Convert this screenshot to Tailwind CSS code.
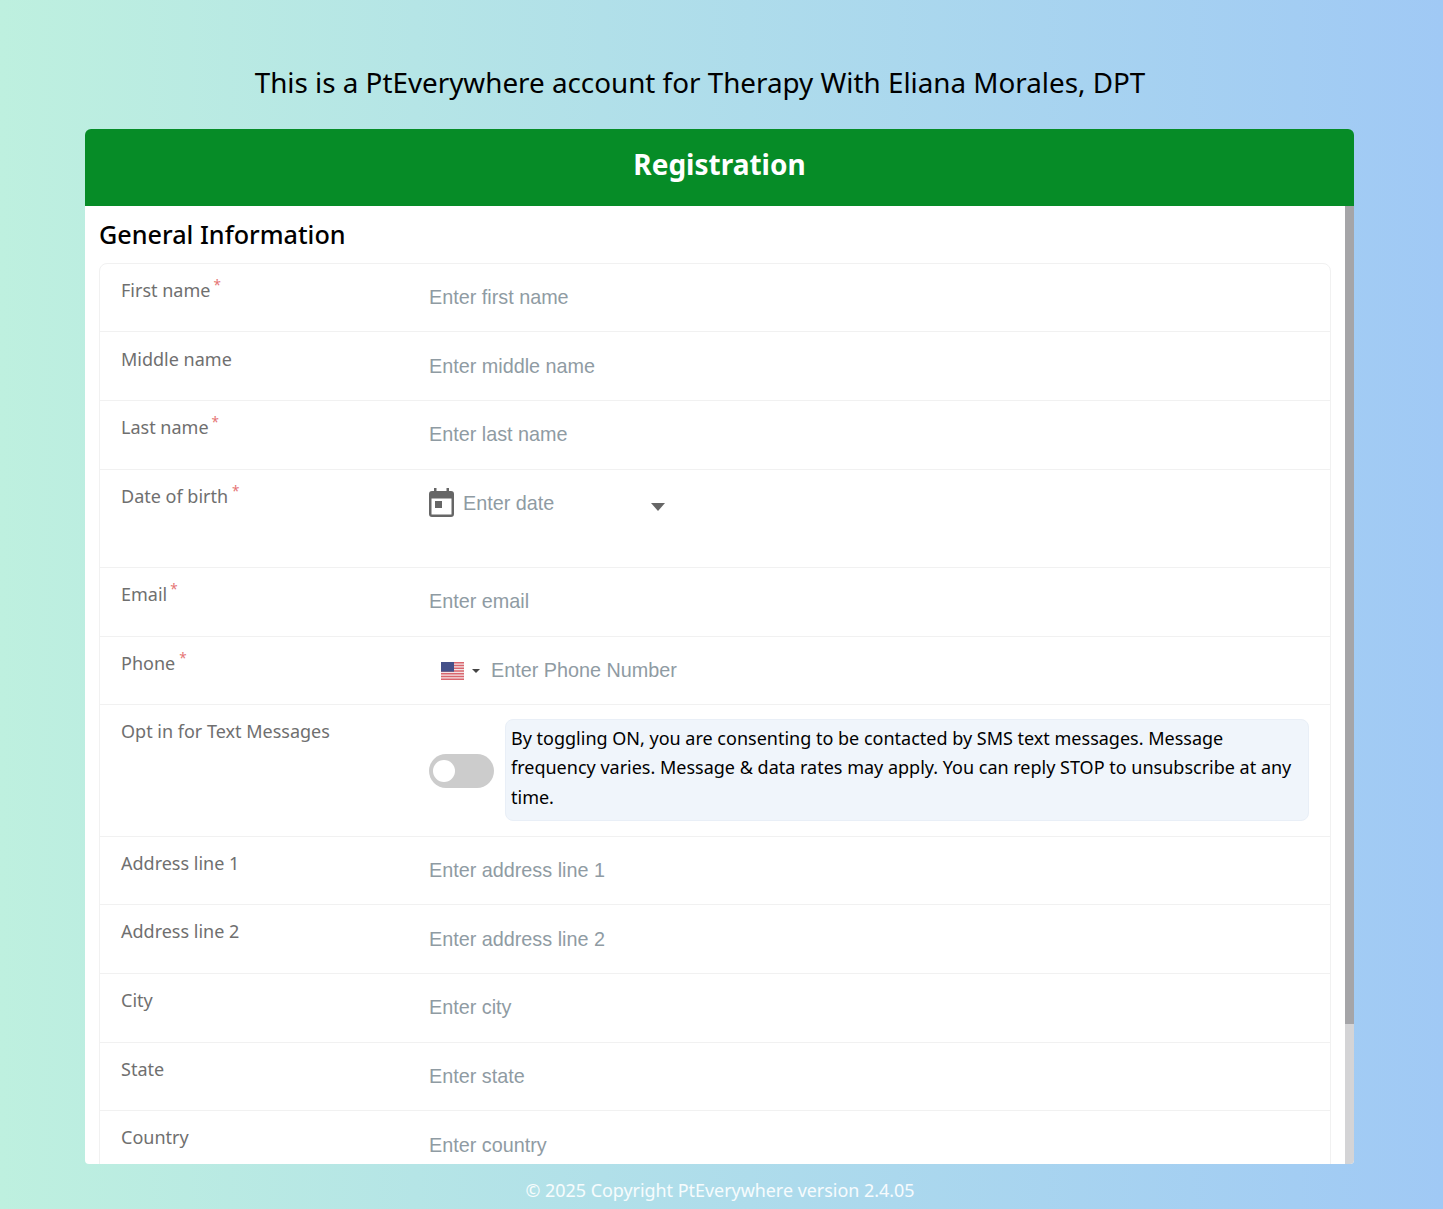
<!doctype html>
<html lang="en">
<head>
    <meta charset="UTF-8">
    <title>Registration</title>
    <script src="https://cdn.jsdelivr.net/npm/@tailwindcss/browser@4"></script>
</head>
<body class="h-[1209px] overflow-hidden bg-gradient-to-r from-[#bef0df] to-[#a0c9f5] font-['Noto_Sans',sans-serif]">
<div class="h-[129px] pt-[60px] pr-[43px] text-center text-[27.8px] leading-[44px] text-black">This is a PtEverywhere account for Therapy With Eliana Morales, DPT</div>

<div class="ml-[85px] w-[1269px] h-[1035px] flex flex-col">
    <div class="h-[77px] shrink-0 flex items-center justify-center pb-[7px] rounded-t-md bg-[#068c27] text-[28px] font-bold text-white">Registration</div>
    <div class="h-[958px] flex rounded-b-sm overflow-hidden bg-white">
        <div class="flex-1 overflow-hidden px-[14px]">
            <h2 class="h-[57px] pt-[11px] text-[25.2px] leading-[34px] font-medium text-black">General Information</h2>
            <div class="rounded-lg border border-[#f1f1f1] text-[18px] text-[#6f6f6f]">
                <div class="h-[68px] flex border-b border-[#f1f1f1]">
                    <label class="w-[329px] pl-[21px] pt-[12px] leading-[28px]">First name<sup class="ml-[3px] text-[#e57373]">*</sup></label>
                    <input class="flex-1 self-center bg-transparent font-['Liberation_Sans',sans-serif] text-[19.8px] outline-none placeholder:text-[#8f9ba3]" placeholder="Enter first name">
                </div>
                <div class="h-[69px] flex border-b border-[#f1f1f1]">
                    <label class="w-[329px] pl-[21px] pt-[13px] leading-[28px]">Middle name</label>
                    <input class="flex-1 self-center mt-[2px] bg-transparent font-['Liberation_Sans',sans-serif] text-[19.8px] outline-none placeholder:text-[#8f9ba3]" placeholder="Enter middle name">
                </div>
                <div class="h-[69px] flex border-b border-[#f1f1f1]">
                    <label class="w-[329px] pl-[21px] pt-[12px] leading-[28px]">Last name<sup class="ml-[3px] text-[#e57373]">*</sup></label>
                    <input class="flex-1 self-center bg-transparent font-['Liberation_Sans',sans-serif] text-[19.8px] outline-none placeholder:text-[#8f9ba3]" placeholder="Enter last name">
                </div>
                <div class="h-[98px] flex border-b border-[#f1f1f1]">
                    <label class="w-[329px] pl-[21px] pt-[12px] leading-[28px]">Date of birth<sup class="ml-1 text-[#e57373]">*</sup></label>
                    <div class="w-[237px] h-[50px] flex items-start pt-[18px]">
                        <svg class="w-[25px] h-[29px] shrink-0" viewBox="0 0 25 29" fill="#666">
                            <path fill-rule="evenodd" d="M5 0h2.500v3h10V0H20v3h2a3 3 0 0 1 3 3v20a3 3 0 0 1-3 3H3a3 3 0 0 1-3-3V6a3 3 0 0 1 3-3h2zM2.500 10.500V26.500h20V10.500z"/>
                            <path d="M6 13h7v7H6z"/>
                        </svg>
                        <input class="ml-[9px] w-[188px] bg-transparent font-['Liberation_Sans',sans-serif] text-[19.8px] leading-[30px] outline-none placeholder:text-[#8f9ba3]" placeholder="Enter date">
                        <svg class="mt-[15px] w-[14px] h-[8px] shrink-0" viewBox="0 0 14 8" fill="#666"><path d="M0 0h14L7 8z"/></svg>
                    </div>
                </div>
                <div class="h-[69px] flex border-b border-[#f1f1f1]">
                    <label class="w-[329px] pl-[21px] pt-[12px] leading-[28px]">Email<sup class="ml-[3px] text-[#e57373]">*</sup></label>
                    <input class="flex-1 self-center bg-transparent font-['Liberation_Sans',sans-serif] text-[19.8px] outline-none placeholder:text-[#8f9ba3]" placeholder="Enter email">
                </div>
                <div class="h-[68px] flex border-b border-[#f1f1f1]">
                    <label class="w-[329px] pl-[21px] pt-[12px] leading-[28px]">Phone<sup class="ml-1 text-[#e57373]">*</sup></label>
                    <div class="flex-1 flex items-center pl-[12px]">
                        <svg class="w-[23px] h-[18px] shrink-0" viewBox="0 0 23 18">
                            <rect width="23" height="18" fill="#f3e4e6"/>
                            <path fill="#d9666e" d="M0 0h23v1.400H0zM0 2.800h23v1.400H0zM0 5.500h23v1.400H0zM0 8.300h23v1.400H0zM0 11.100h23v1.400H0zM0 13.800h23v1.400H0zM0 16.600h23V18H0z"/>
                            <rect width="13" height="9.700" fill="#445089"/>
                        </svg>
                        <svg class="ml-[8px] w-[8px] h-[4px] shrink-0" viewBox="0 0 8 4" fill="#444"><path d="M0 0h8L4 4z"/></svg>
                        <input class="ml-[11px] flex-1 bg-transparent font-['Liberation_Sans',sans-serif] text-[19.8px] outline-none placeholder:text-[#8f9ba3]" placeholder="Enter Phone Number">
                    </div>
                </div>
                <div class="h-[132px] flex border-b border-[#f1f1f1]">
                    <label class="w-[329px] pl-[21px] pt-[12px] leading-[28px]">Opt in for Text Messages</label>
                    <div class="flex-1 flex items-center pr-[21px] pb-[2px]">
                        <div class="w-[65px] h-[34px] mt-[2px] shrink-0 flex items-center rounded-full bg-[#cccccc] pl-[4px]">
                            <div class="w-[22px] h-[22px] rounded-full bg-white"></div>
                        </div>
                        <p class="ml-[11px] flex-1 h-[102px] rounded-lg border border-[#e9eff7] bg-[#f0f5fb] pl-[5px] pr-[10px] pt-[4px] text-[18px] leading-[29.5px] text-black">By toggling ON, you are consenting to be contacted by SMS text messages. Message frequency varies. Message &amp; data rates may apply. You can reply STOP to unsubscribe at any time.</p>
                    </div>
                </div>
                <div class="h-[68px] flex border-b border-[#f1f1f1]">
                    <label class="w-[329px] pl-[21px] pt-[12px] leading-[28px]">Address line 1</label>
                    <input class="flex-1 self-center bg-transparent font-['Liberation_Sans',sans-serif] text-[19.8px] outline-none placeholder:text-[#8f9ba3]" placeholder="Enter address line 1">
                </div>
                <div class="h-[69px] flex border-b border-[#f1f1f1]">
                    <label class="w-[329px] pl-[21px] pt-[12px] leading-[28px]">Address line 2</label>
                    <input class="flex-1 self-center mt-[2px] bg-transparent font-['Liberation_Sans',sans-serif] text-[19.8px] outline-none placeholder:text-[#8f9ba3]" placeholder="Enter address line 2">
                </div>
                <div class="h-[69px] flex border-b border-[#f1f1f1]">
                    <label class="w-[329px] pl-[21px] pt-[12px] leading-[28px]">City</label>
                    <input class="flex-1 self-center bg-transparent font-['Liberation_Sans',sans-serif] text-[19.8px] outline-none placeholder:text-[#8f9ba3]" placeholder="Enter city">
                </div>
                <div class="h-[68px] flex border-b border-[#f1f1f1]">
                    <label class="w-[329px] pl-[21px] pt-[12px] leading-[28px]">State</label>
                    <input class="flex-1 self-center bg-transparent font-['Liberation_Sans',sans-serif] text-[19.8px] outline-none placeholder:text-[#8f9ba3]" placeholder="Enter state">
                </div>
                <div class="h-[68px] flex">
                    <label class="w-[329px] pl-[21px] pt-[12px] leading-[28px]">Country</label>
                    <input class="flex-1 self-center mt-[2px] bg-transparent font-['Liberation_Sans',sans-serif] text-[19.8px] outline-none placeholder:text-[#8f9ba3]" placeholder="Enter country">
                </div>
            </div>
        </div>
        <div class="w-[9px] h-full shrink-0 bg-[#d4d4d6]">
            <div class="h-[818px] bg-[#a5a5a8]"></div>
        </div>
    </div>
</div>

<div class="h-[45px] pt-[11px] pr-[3px] text-center text-[17.9px] leading-[30px] text-white/90">© 2025 Copyright PtEverywhere version 2.4.05</div>
</body>
</html>
